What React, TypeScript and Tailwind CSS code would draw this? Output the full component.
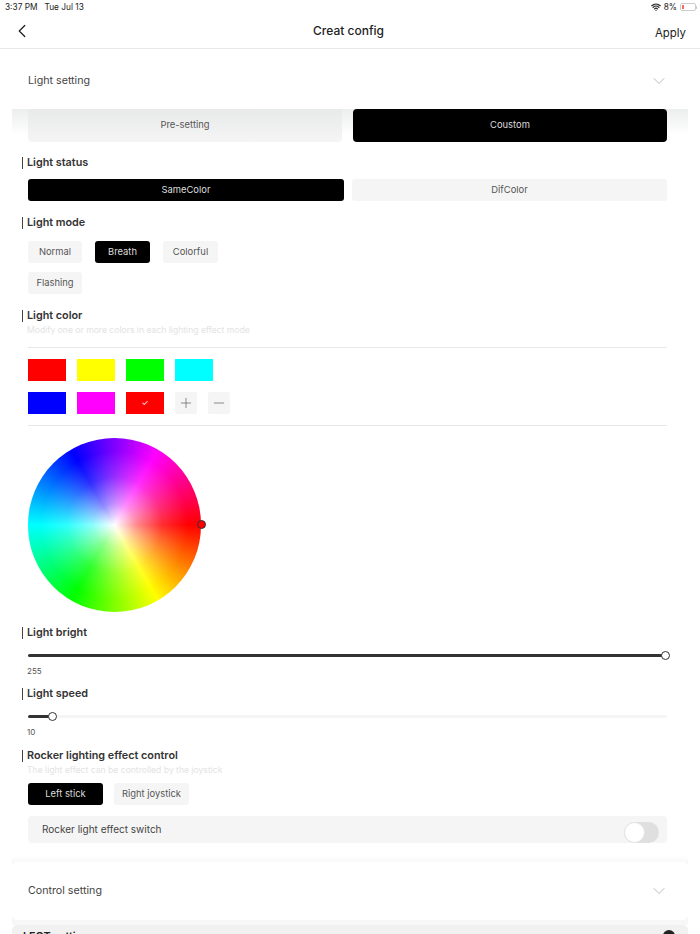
import { ChevronDown, ChevronLeft, Minus, Plus, Wifi } from "lucide-react";

const font = { fontFamily: "Inter, 'Liberation Sans', sans-serif" };

const Heading = ({ title, hint }: { title: string; hint?: string }) => (
    <div className="flex flex-col">
        <div className="flex items-center h-[12px] -ml-[6px]">
            <span className="w-px h-[12px] bg-[#444] mr-1" />
            <span className="text-[10.8px] leading-[12px] font-semibold text-[#333]">{title}</span>
        </div>
        {hint && <p className="-ml-px mt-[2px] text-[8.6px] leading-[12px] text-[#e3e3e3]">{hint}</p>}
    </div>
);

const Chip = ({ label, active, className }: { label: string; active?: boolean; className: string }) => (
    <div className={`flex items-center justify-center rounded-[3px] text-[9.4px] ${active ? "bg-black text-[#ddd]" : "bg-[#f5f5f5] text-[#555]"} ${className}`}>
        {label}
    </div>
);

const Slider = ({ percent, value }: { percent: number; value: string }) => (
    <div className="flex flex-col">
        <div className="relative h-[3px] rounded-full bg-[#f5f5f5] mt-[15px]">
            <div className="h-full rounded-full bg-[#333]" style={{ width: `${percent}%` }} />
            <div className="absolute top-[-3px] w-[9px] h-[9px] rounded-full border border-[#333] bg-white" style={{ left: `calc(${percent}% - 4.5px)` }} />
        </div>
        <span className="-ml-px mt-[9px] text-[8px] leading-[10px] text-[#555]">{value}</span>
    </div>
);

const Section = ({ title, className }: { title: string; className: string }) => (
    <div className={`flex items-center justify-between rounded-[5px] bg-white pl-[16px] pr-[19px] ${className}`}>
        <span className="text-[10.7px] text-[#444]">{title}</span>
        <ChevronDown size={20} strokeWidth={0.8} color="#999" />
    </div>
);

const colorsTop = ["bg-[#ff0000]", "bg-[#ffff00]", "bg-[#00ff00]", "bg-[#00ffff]"];

export default function App() {
    return (
        <div className="relative w-[700px] h-[934px] overflow-hidden bg-white" style={font}>
            {/* Status bar */}
            <div className="flex items-center justify-between h-[14px] pl-[5px] pr-[3px] text-[8.3px] text-[#222]">
                <span className="whitespace-pre">3:37 PM   Tue Jul 13</span>
                <div className="flex items-center gap-[3px]">
                    <Wifi size={10} strokeWidth={3} />
                    <span>8%</span>
                    <div className="flex items-center">
                        <div className="w-[16px] h-[8px] rounded-[2px] border border-[#ccc] p-px">
                            <div className="w-[2px] h-full bg-[#ff6b60]" />
                        </div>
                        <div className="w-px h-[3px] bg-[#ccc]" />
                    </div>
                </div>
            </div>

            {/* Nav bar */}
            <div className="flex items-center h-[35px] pl-[11px] pr-[14px] border-b border-[#e8e8e8]">
                <div className="flex-1">
                    <ChevronLeft size={22} strokeWidth={1.4} color="#222" />
                </div>
                <span className="text-[12px] font-medium text-[#222]">Creat config</span>
                <div className="flex-1 text-right">
                    <span className="text-[11.4px] text-[#222]">Apply</span>
                </div>
            </div>

            <div className="mx-[12px] w-[676px]">
                <Section title="Light setting" className="h-[60px] pt-[4px]" />

                <div className="flex flex-col pl-[16px] pr-[21px] bg-[linear-gradient(to_bottom,#eceded,#ffffff_26px)]">
                    <div className="flex gap-[11px]">
                        <Chip label="Pre-setting" className="w-[314px] h-[33px] rounded-[4px] !bg-[linear-gradient(to_bottom,#e8e9e9,#f5f5f5)]" />
                        <Chip label="Coustom" active className="w-[314px] h-[33px] rounded-[4px]" />
                    </div>

                    <div className="mt-[15px]">
                        <Heading title="Light status" />
                    </div>
                    <div className="flex gap-[8px] mt-[10px]">
                        <Chip label="SameColor" active className="w-[316px] h-[22px]" />
                        <Chip label="DifColor" className="w-[315px] h-[22px]" />
                    </div>

                    <div className="mt-[16px]">
                        <Heading title="Light mode" />
                    </div>
                    <div className="flex gap-[13px] mt-[12px]">
                        <Chip label="Normal" className="w-[54px] h-[22px]" />
                        <Chip label="Breath" active className="w-[55px] h-[22px]" />
                        <Chip label="Colorful" className="w-[55px] h-[22px]" />
                    </div>
                    <div className="flex mt-[9px]">
                        <Chip label="Flashing" className="w-[54px] h-[22px]" />
                    </div>

                    <div className="mt-[16px]">
                        <Heading title="Light color" hint="Modify one or more colors in each lighting effect mode" />
                    </div>
                    <div className="h-px bg-[#e8e8e8] mt-[11px]" />
                    <div className="flex gap-[11px] mt-[11px]">
                        {colorsTop.map((c) => (
                            <div key={c} className={`w-[38px] h-[22px] ${c}`} />
                        ))}
                    </div>
                    <div className="flex gap-[11px] mt-[11px]">
                        <div className="w-[38px] h-[22px] bg-[#0000ff]" />
                        <div className="w-[38px] h-[22px] bg-[#ff00ff]" />
                        <div className="flex items-center justify-center w-[38px] h-[22px] bg-[#ff0000] text-[8px] leading-none text-white">✓</div>
                        <div className="flex items-center justify-center w-[22px] h-[22px] rounded-[2px] bg-[#f5f5f5]">
                            <Plus size={16} strokeWidth={1} color="#555" />
                        </div>
                        <div className="flex items-center justify-center w-[22px] h-[22px] rounded-[2px] bg-[#f5f5f5]">
                            <Minus size={16} strokeWidth={1} color="#555" />
                        </div>
                    </div>
                    <div className="h-px bg-[#e8e8e8] mt-[11px]" />

                    {/* Colour wheel */}
                    <div className="relative w-[173px] h-[174px] mt-[12px]">
                        <div className="w-full h-full rounded-full bg-[conic-gradient(from_90deg,#ff0000,#ffff00_60deg,#00ff00_120deg,#00ffff_180deg,#0000ff_240deg,#ff00ff_300deg,#ff0000)]" />
                        <div className="absolute inset-0 rounded-full bg-[radial-gradient(closest-side,#ffffff,rgba(255,255,255,0.55)_25%,rgba(255,255,255,0.18)_55%,rgba(255,255,255,0)_85%)]" />
                        <div className="absolute right-[-5px] top-[82px] w-[9px] h-[9px] rounded-full border border-[#333] bg-[#ff0000]" />
                    </div>

                    <div className="mt-[15px]">
                        <Heading title="Light bright" />
                    </div>
                    <Slider percent={99.7} value="255" />

                    <div className="mt-[12px]">
                        <Heading title="Light speed" />
                    </div>
                    <Slider percent={3.9} value="10" />

                    <div className="mt-[13px]">
                        <Heading title="Rocker lighting effect control" hint="The light effect can be controlled by the joystick" />
                    </div>
                    <div className="flex gap-[11px] mt-[7px]">
                        <Chip label="Left stick" active className="w-[75px] h-[22px]" />
                        <Chip label="Right joystick" className="w-[75px] h-[22px]" />
                    </div>
                    <div className="flex items-center justify-between h-[27px] mt-[11px] rounded-[4px] bg-[#f5f5f5] pl-[14px] pr-[8px]">
                        <span className="text-[10px] text-[#444]">Rocker light effect switch</span>
                        <div className="relative self-end w-[35px] h-[21px] rounded-full bg-[#dfdfdf]">
                            <div className="absolute left-0 top-0 w-[21px] h-[21px] rounded-full bg-white border border-[#e5e5e5]" />
                        </div>
                    </div>
                </div>

                <div className="mt-[12px] h-[7px] rounded-t-[5px] bg-[linear-gradient(to_bottom,#ffffff,#f9f9f9)]" />
                <div className="bg-[#f7f7f7] pb-[5px]">
                    <Section title="Control setting" className="h-[58px]" />
                </div>
                <div className="relative h-[20px] rounded-t-[5px] bg-[#f1f1f1] pl-[11px] pt-[5px] text-[10.8px] font-semibold leading-[14px] text-[#222]">
                    LFOT setting
                    <div className="absolute right-[13px] top-[5px] w-[12px] h-[12px] rounded-full bg-[#222]" />
                </div>
            </div>
        </div>
    );
}
